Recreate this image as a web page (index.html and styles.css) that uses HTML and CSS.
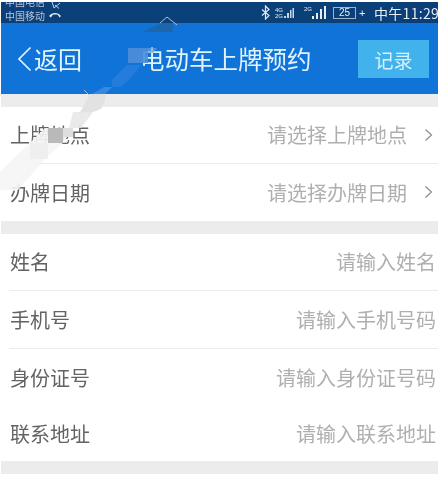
FILE: index.html
```html
<!DOCTYPE html>
<html lang="zh">
<head>
<meta charset="utf-8">
<title>电动车上牌预约</title>
<link rel="stylesheet" href="styles.css">
</head>
<body>
<div class="screen">
  <div class="status">
    <div class="carriers"><span>中国电信</span><span>中国移动</span></div>
    <svg class="call" width="16" height="20" viewBox="0 0 16 20"><path d="M4 1l2 6 6-5M7 4l4 3.500" fill="none" stroke="#c4d2e2" stroke-width="1"/><path d="M1 15c3-4 9-4 12 0l-1.500 1.500-1.500-2.500c-1.500-.6-4-.6-5.500 0l-1.500 2.500z" fill="#e4ecf4"/></svg>
    <div class="sys">
      <svg class="bt" width="9" height="15" viewBox="0 0 9 15"><path d="M1 4.500l7 6-3.500 3.500V1L8 4.500l-7 6" fill="none" stroke="#dfe8f2" stroke-width="1.200"/></svg>
      <div class="net"><span>4G</span><span>2G</span></div>
      <svg class="dots" width="10" height="12" viewBox="0 0 10 12"><path d="M0 9h2v2H0zM3 6h2v5H3zM6 3h1.500v8H6zM8.500 1H10v10H8.500z" fill="#c6d4e3"/></svg>
      <div class="sim">2G</div>
      <svg class="bars" width="14" height="13" viewBox="0 0 14 13"><path d="M0 10h2v3H0zM4 7h2v6H4zM8 3h2v10H8zM12 0h2v13h-2z" fill="#e4ecf4"/></svg>
      <div class="batt">25</div>
      <span class="plus">+</span>
      <span class="clock">中午11:29</span>
    </div>
  </div>
  <header class="bar">
    <div class="back">
      <svg width="15" height="26" viewBox="0 0 15 26"><path d="M13.500 1.500L2 13l11.500 11.500" fill="none" stroke="#e3f1fd" stroke-width="1.700"/></svg>
      <span>返回</span>
    </div>
    <h1 class="title">电动车上牌预约</h1>
    <button class="record">记录</button>
  </header>
  <div class="gap"></div>
  <section class="group first">
    <div class="row"><span class="label">上牌地点</span><span class="hint">请选择上牌地点</span><svg class="chev" width="9" height="14" viewBox="0 0 9 14"><path d="M1.500 1.500L7.500 7l-6 5.500" fill="none" stroke="#8d8d8d" stroke-width="1.200"/></svg></div>
    <div class="row"><span class="label">办牌日期</span><span class="hint">请选择办牌日期</span><svg class="chev" width="9" height="14" viewBox="0 0 9 14"><path d="M1.500 1.500L7.500 7l-6 5.500" fill="none" stroke="#8d8d8d" stroke-width="1.200"/></svg></div>
  </section>
  <div class="gap"></div>
  <section class="group second">
    <div class="row"><span class="label">姓名</span><span class="hint">请输入姓名</span></div>
    <div class="row tall"><span class="label">手机号</span><span class="hint">请输入手机号码</span></div>
    <div class="row plain"><span class="label">身份证号</span><span class="hint">请输入身份证号码</span></div>
    <div class="row"><span class="label">联系地址</span><span class="hint">请输入联系地址</span></div>
  </section>
  <div class="gap"></div>
  <svg class="mark" width="438" height="477" viewBox="0 0 438 477">
    <path d="M160 23l7-6 10 8" fill="none" stroke="#a9c2dc" stroke-width="1"/>
    <path d="M142 32l20-9h11v9z" fill="#1c66ae"/>
    <path d="M128 48h20v15h-20z" fill="#4d8fd8" fill-opacity=".9"/>
    <path d="M148 48h9l-4 5h-5z" fill="#6ba3e0" fill-opacity=".7"/>
    <path d="M112 80l15-15h14l-12 15-9 7h-8z" fill="#2b80dc" fill-opacity=".8"/>
    <path d="M92 94l12-7h8l-7 7z" fill="#4a91dd" fill-opacity=".7"/>
    <path d="M84 90l5 5" fill="none" stroke="#9fbfe0" stroke-width="1"/>
    <path d="M90 94h15v7l-4 8-8 3-15 3 4-6z" fill="#e2e2e2"/>
    <path d="M73 112h20l-12 16h-12z" fill="#e8e8e8" fill-opacity=".9"/>
    <path d="M45 128h28l-10 15-18 16-27 31H0v-18z" fill="#f5f5f5" fill-opacity=".9"/>
    <path d="M63 128h10v9h-10z" fill="#dedede"/>
    <path d="M48 128h15v15H48z" fill="#b9b9b9"/>
    <path d="M30 143h18v16H30z" fill="#eeeeee" fill-opacity=".9"/>
  </svg>
</div>
</body>
</html>
```
FILE: styles.css
```css
* { box-sizing: border-box; }
html, body { margin: 0; padding: 0; background: #fff; }
.screen {
  position: relative;
  width: 438px;
  height: 477px;
  overflow: hidden;
  padding: 2px 0 0 1px;
  font-family: "Noto Sans CJK SC", "Noto Sans", sans-serif;
  background: #fff;
  filter: blur(.35px);
}
.status {
  height: 21px;
  display: flex;
  align-items: center;
  background: linear-gradient(90deg, #0c3f78, #0a4179 50%, #0b3e76);
  color: #c9d6e4;
  padding-left: 4px;
  overflow: hidden;
}
.carriers {
  display: flex;
  flex-direction: column;
  font-size: 10px;
  line-height: 14px;
  margin-top: -8px;
  color: #b4c5d8;
}
.call { margin-left: 3px; margin-top: -4px; }
.sys {
  margin-left: auto;
  display: flex;
  align-items: center;
  color: #e6edf5;
}
.bt { margin-right: 5px; }
.net {
  display: flex;
  flex-direction: column;
  width: 9px;
  font-size: 6px;
  line-height: 6px;
  font-family: "Liberation Sans", sans-serif;
}
.dots { margin-right: 10px; }
.sim {
  width: 8px;
  font-size: 6px;
  font-family: "Liberation Sans", sans-serif;
  margin-top: -7px;
}
.bars { margin-right: 7px; }
.batt {
  width: 23px;
  height: 12px;
  border: 1px solid #9fb4cb;
  font-size: 10px;
  line-height: 10px;
  text-align: center;
  font-family: "Liberation Sans", sans-serif;
}
.plus {
  width: 10px;
  padding-left: 3px;
  margin-right: 8px;
  font-size: 11px;
  font-family: "Liberation Sans", sans-serif;
}
.clock { width: 64px; font-size: 14px; line-height: 18px; letter-spacing: .3px; white-space: nowrap; }
.bar {
  height: 71px;
  display: flex;
  align-items: center;
  background: #1073d8;
  color: #e3f4fd;
  padding: 0 9px 0 16px;
}
.back { display: flex; align-items: center; gap: 2px; width: 123px; font-size: 24px; }
.back span { line-height: 30px; }
.title {
  margin: 0;
  font-size: 24.500px;
  font-weight: 400;
  line-height: 32px;
  white-space: nowrap;
  color: #e0f2fc;
}
.record {
  margin-left: auto;
  margin-top: 1px;
  width: 71px;
  height: 38px;
  border: 0;
  padding: 0;
  background: #41b2ec;
  color: #d9f1fb;
  font: inherit;
  font-size: 19px;
}
.gap { height: 13px; background: #ececec; }
.group { background: #fff; }
.first { height: 114px; }
.second { height: 227px; }
.row {
  height: 57px;
  margin-left: 8px;
  display: flex;
  align-items: center;
  padding: 0 2px 1px 1px;
  border-bottom: 1px solid #ececec;
}
.tall { height: 58px; }
.second .row:last-child { height: 55px; }
.row:last-child, .plain { border-bottom: 0; }
.label { font-size: 20px; color: #636363; }
.hint { margin-left: auto; font-size: 20px; color: #afafaf; }
.chev { margin: 0 3px 0 17px; }
.mark { position: absolute; left: 0; top: 0; pointer-events: none; }
```
